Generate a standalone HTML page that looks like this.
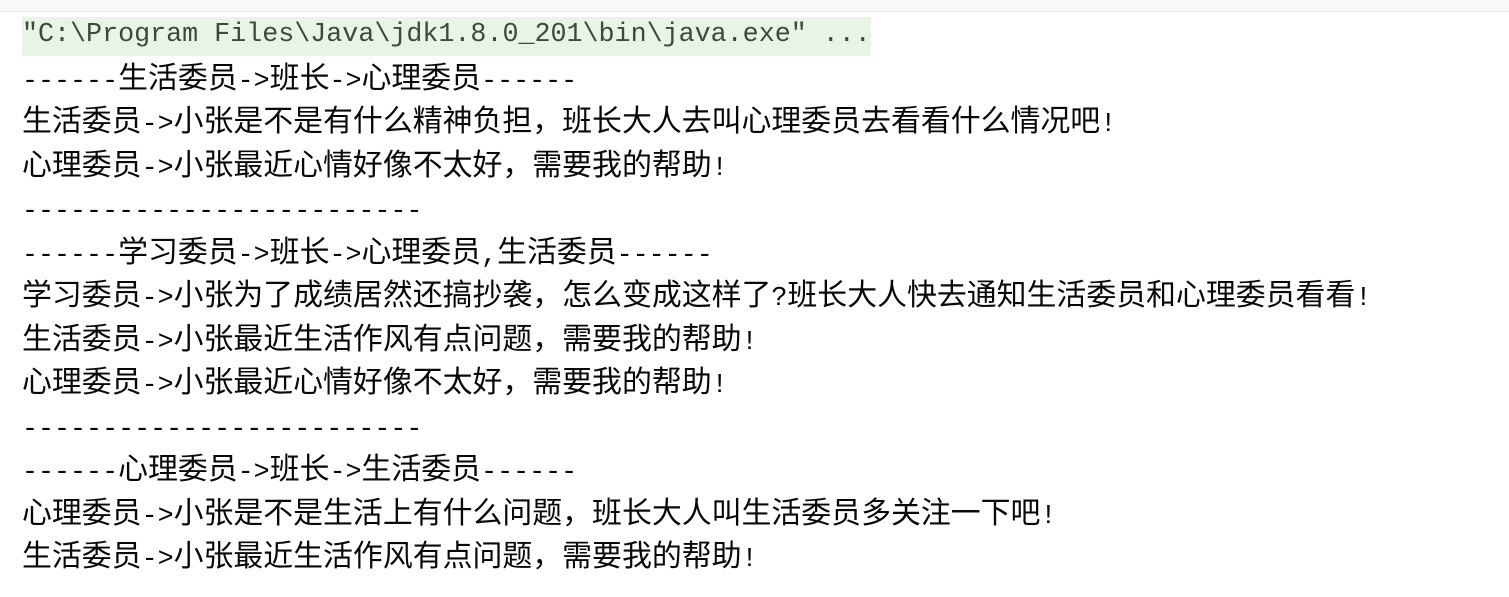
<!DOCTYPE html>
<html><head><meta charset="utf-8"><style>
html,body{margin:0;padding:0;background:#fff;width:1509px;height:597px;overflow:hidden}
.bar{position:absolute;left:0;top:0;width:1509px;height:11px;background:#f7f8fa;border-bottom:1px solid #e8e9ec}
.c{position:absolute;left:22px;top:17px;font-family:"Liberation Mono","Noto Sans CJK SC",monospace;font-size:26.7px;line-height:43.5px;color:#080808}
.c div{height:43.5px;white-space:pre;overflow:hidden}
b{font-weight:normal;font-family:"Noto Sans CJK SC",sans-serif;font-size:29.9px;line-height:1}
.h{background:#e8f4e6;color:#3d4a3a;margin-left:-2px;padding-left:2px;display:inline-block;height:42px;line-height:42px;position:relative;top:-3px}
</style></head><body>
<div class="bar"></div>
<div class="c"><div><span class="h">"C:\Program Files\Java\jdk1.8.0_201\bin\java.exe" ...</span></div><div>------<b>生活委员</b>-&gt;<b>班长</b>-&gt;<b>心理委员</b>------</div><div><b>生活委员</b>-&gt;<b>小张是不是有什么精神负担，班长大人去叫心理委员去看看什么情况吧</b>!</div><div><b>心理委员</b>-&gt;<b>小张最近心情好像不太好，需要我的帮助</b>!</div><div>-------------------------</div><div>------<b>学习委员</b>-&gt;<b>班长</b>-&gt;<b>心理委员</b>,<b>生活委员</b>------</div><div><b>学习委员</b>-&gt;<b>小张为了成绩居然还搞抄袭，怎么变成这样了</b>?<b>班长大人快去通知生活委员和心理委员看看</b>!</div><div><b>生活委员</b>-&gt;<b>小张最近生活作风有点问题，需要我的帮助</b>!</div><div><b>心理委员</b>-&gt;<b>小张最近心情好像不太好，需要我的帮助</b>!</div><div>-------------------------</div><div>------<b>心理委员</b>-&gt;<b>班长</b>-&gt;<b>生活委员</b>------</div><div><b>心理委员</b>-&gt;<b>小张是不是生活上有什么问题，班长大人叫生活委员多关注一下吧</b>!</div><div><b>生活委员</b>-&gt;<b>小张最近生活作风有点问题，需要我的帮助</b>!</div></div>
</body></html>
